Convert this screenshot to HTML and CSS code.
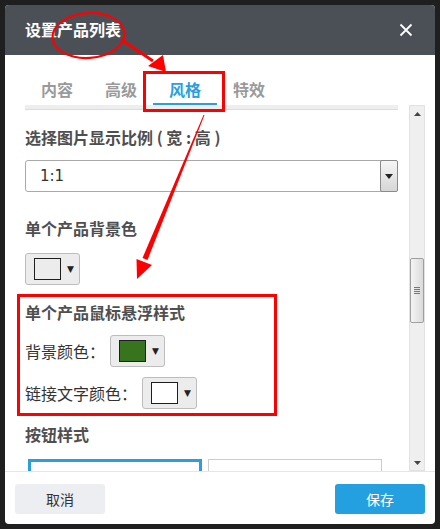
FILE: index.html
```html
<!DOCTYPE html>
<html lang="zh-CN">
<head>
<meta charset="utf-8">
<title>设置产品列表</title>
<link rel="stylesheet" href="styles.css">
</head>
<body>
<div class="dialog">
  <div class="header">
    <div class="title">设置产品列表</div>
    <svg class="close" width="14" height="14" viewBox="0 0 14 14"><path d="M1.5 1.5 L12.5 12.5 M12.5 1.5 L1.5 12.5" stroke="#fff" stroke-width="1.8" fill="none"/></svg>
  </div>
  <div class="body">
    <div class="pane">
      <div class="tabs">
        <div class="tab">内容</div>
        <div class="tab">高级</div>
        <div class="tab active">风格</div>
        <div class="tab">特效</div>
      </div>
      <div class="strip"></div>
      <div class="content">
        <div class="heading h1">选择图片显示比例 ( 宽 : 高 )</div>
        <div class="select">
          <span class="select-value">1:1</span>
          <span class="select-btn"><svg width="8" height="5" viewBox="0 0 8 5"><path d="M0 0 H8 L4 5 Z" fill="#222"/></svg></span>
        </div>
        <div class="heading h2">单个产品背景色</div>
        <div class="picker p1"><span class="swatch sw-light"></span><span class="caret">▼</span></div>
        <div class="heading h3">单个产品鼠标悬浮样式</div>
        <div class="row r1"><span class="label">背景颜色：</span><div class="picker"><span class="swatch sw-green"></span><span class="caret">▼</span></div></div>
        <div class="row r2"><span class="label">链接文字颜色：</span><div class="picker"><span class="swatch sw-white"></span><span class="caret">▼</span></div></div>
        <div class="heading h4">按钮样式</div>
        <div class="styles">
          <div class="style-box selected"></div>
          <div class="style-box"></div>
        </div>
      </div>
    </div>
    <div class="scrollbar">
      <div class="sb-arrow"><svg width="7" height="4" viewBox="0 0 7 4"><path d="M0 4 H7 L3.5 0 Z" fill="#444"/></svg></div>
      <div class="sb-track">
        <div class="sb-thumb"><span></span><span></span><span></span><span></span></div>
      </div>
      <div class="sb-arrow"><svg width="7" height="4" viewBox="0 0 7 4"><path d="M0 0 H7 L3.5 4 Z" fill="#444"/></svg></div>
    </div>
  </div>
  <div class="footer">
    <div class="btn cancel">取消</div>
    <div class="btn save">保存</div>
  </div>
</div>
<svg class="annot" width="440" height="529" viewBox="0 0 440 529">
  <ellipse cx="88.5" cy="35.5" rx="36" ry="22.5" fill="none" stroke="#f00" stroke-width="2.2" transform="rotate(-4 88.5 35.5)"/>
  <path d="M122 40 L153 61" stroke="#f00" stroke-width="3" fill="none"/>
  <polygon points="148,66 163,55 166,72" fill="#f00"/>
  <rect x="144.5" y="72.5" width="79" height="38" fill="none" stroke="#f00" stroke-width="3"/>
  <polygon points="204.5,115 203.5,115 142.5,258 147.5,260" fill="#f00"/>
  <polygon points="136.5,259 152,265 137,279" fill="#f00"/>
  <rect x="18.5" y="295.5" width="257" height="119" fill="none" stroke="#f00" stroke-width="3"/>
</svg>
</body>
</html>
```
FILE: styles.css
```css
html, body {
  margin: 0;
  padding: 0;
}
body {
  width: 440px;
  height: 529px;
  background: #1f1f1f;
  font-family: "Noto Sans CJK SC", "Liberation Sans", sans-serif;
  position: relative;
  overflow: hidden;
  padding: 5px;
  box-sizing: border-box;
}
.dialog {
  width: 430px;
  height: 519px;
  background: #fff;
  border-radius: 4px;
  overflow: hidden;
  display: flex;
  flex-direction: column;
}
.header {
  height: 50px;
  flex: none;
  background: #4b5057;
  display: flex;
  align-items: center;
  justify-content: space-between;
  padding: 0 22px 0 20px;
}
.title {
  color: #fff;
  font-size: 16px;
  font-weight: bold;
  line-height: 20px;
  margin-top: -2px;
}
.close {
  display: block;
  margin-top: -1px;
}
.body {
  height: 416px;
  flex: none;
  display: flex;
  padding-right: 10px;
}
.pane {
  flex: 1;
  padding: 0 11px 0 20px;
  display: flex;
  flex-direction: column;
  min-width: 0;
}
.tabs {
  display: flex;
  height: 50px;
  flex: none;
}
.tab {
  padding: 20px 16px 0;
  height: 28px;
  line-height: 28px;
  font-size: 16px;
  font-weight: bold;
  color: #9a9a9a;
  border-bottom: 2px solid transparent;
}
.tab.active {
  color: #2a9fe0;
  border-bottom-color: #2a9fe0;
}
.strip {
  height: 4px;
  flex: none;
  background: #eeeeee;
  border-bottom: 1px solid #dcdcdc;
}
.content {
  height: 361px;
  overflow: hidden;
}
.heading {
  font-size: 16px;
  font-weight: bold;
  color: #4f4f4f;
  line-height: 20px;
  white-space: pre;
}
.h1 { margin-top: 17px; }
.h2 { margin-top: 26px; }
.h3 { margin-top: 17px; }
.h4 { margin-top: 15px; }
.select {
  margin-top: 13px;
  height: 30px;
  border: 1px solid #a9a9a9;
  border-radius: 3px;
  display: flex;
  align-items: stretch;
  justify-content: space-between;
}
.select-value {
  padding-left: 14px;
  font-family: "DejaVu Sans", sans-serif;
  font-size: 15px;
  line-height: 30px;
  color: #333;
}
.select-btn {
  width: 16px;
  border: 1px solid #8a8a8a;
  border-radius: 2px;
  margin: -1px -1px -1px 0;
  background: linear-gradient(#f6f6f6, #d6d6d6);
  display: flex;
  align-items: center;
  justify-content: center;
}
.select-btn svg { display: block; }
.picker {
  width: 53px;
  height: 30px;
  border: 1px solid #bdbdbd;
  border-radius: 3px;
  background: #ececec;
  display: flex;
  align-items: center;
  flex: none;
}
.p1 { margin-top: 15px; }
.swatch {
  width: 25px;
  height: 20px;
  margin-left: 8px;
  border: 1px solid #1e1e1e;
}
.sw-light { background: #ececec; }
.sw-green { background: #38741d; }
.sw-white { background: #fff; }
.caret {
  margin-left: 6px;
  font-size: 9px;
  color: #222;
  line-height: 10px;
  font-family: "DejaVu Sans", sans-serif;
}
.row {
  display: flex;
  align-items: center;
  height: 32px;
}
.r1 { margin-top: 13px; }
.r2 { margin-top: 10px; }
.label {
  font-size: 16px;
  color: #333;
  line-height: 20px;
  margin-right: 5px;
}
.styles {
  margin-top: 15px;
  padding-left: 3px;
  display: flex;
  gap: 6px;
}
.style-box {
  width: 172px;
  height: 40px;
  border: 1px solid #cccccc;
}
.style-box.selected {
  width: 168px;
  border: 3px solid #2a9fe0;
}
.scrollbar {
  margin-top: 50px;
  width: 14px;
  height: 364px;
  background: #efefef;
  border: 1px solid #e2e2e2;
  display: flex;
  flex-direction: column;
}
.sb-arrow {
  height: 15px;
  flex: none;
  display: flex;
  align-items: center;
  justify-content: center;
}
.sb-arrow svg { display: block; }
.sb-track {
  flex: 1;
  padding-top: 137px;
}
.sb-thumb {
  width: 12px;
  height: 63px;
  border: 1px solid #9f9f9f;
  border-radius: 2px;
  margin-left: 0;
  background: linear-gradient(90deg, #f4f4f4, #dadada);
  display: flex;
  flex-direction: column;
  align-items: center;
  justify-content: center;
  gap: 1px;
}
.sb-thumb span {
  width: 6px;
  height: 1px;
  background: #777;
}
.footer {
  height: 52px;
  flex: none;
  border-top: 1px solid #e6e6e6;
  display: flex;
  justify-content: space-between;
  align-items: flex-start;
  padding: 12px 10px 0;
}
.btn {
  width: 90px;
  height: 30px;
  border-radius: 3px;
  text-align: center;
  line-height: 30px;
  font-size: 14px;
}
.cancel {
  background: #eceef2;
  color: #333;
}
.save {
  background: #24a0e0;
  color: #fff;
}
.annot {
  position: absolute;
  left: 0;
  top: 0;
  pointer-events: none;
}
```
